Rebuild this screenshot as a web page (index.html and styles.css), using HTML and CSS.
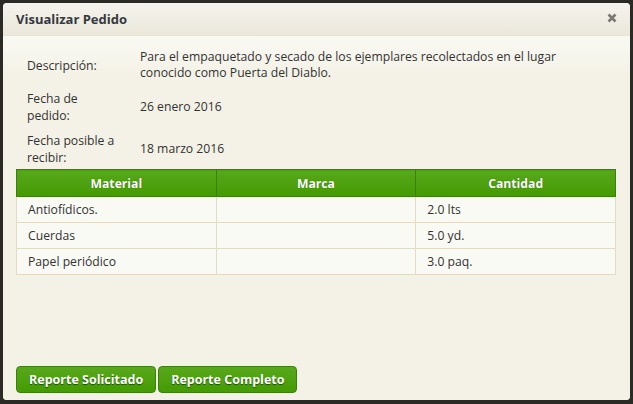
FILE: index.html
```html
<!DOCTYPE html>
<html lang="es">
<head>
<meta charset="utf-8">
<title>Visualizar Pedido</title>
<link rel="stylesheet" href="styles.css">
</head>
<body>
<div class="dialog">
  <div class="titlebar">
    <span class="title">Visualizar Pedido</span>
    <span class="close" aria-label="Cerrar">
      <svg width="10" height="10" viewBox="0 0 10 10"><path d="M1.5 1.5 L8.5 8.5 M8.5 1.5 L1.5 8.5" stroke="#7a7872" stroke-width="2.6" stroke-linecap="butt"/></svg>
    </span>
  </div>
  <div class="content">
    <div class="info">
      <div class="label">Descripción:</div>
      <div class="value">Para el empaquetado y secado de los ejemplares recolectados en el lugar conocido como Puerta del Diablo.</div>
      <div class="label">Fecha de pedido:</div>
      <div class="value">26 enero 2016</div>
      <div class="label">Fecha posible a recibir:</div>
      <div class="value">18 marzo 2016</div>
    </div>
    <table class="grid">
      <thead>
        <tr><th>Material</th><th>Marca</th><th>Cantidad</th></tr>
      </thead>
      <tbody>
        <tr><td>Antiofídicos.</td><td></td><td>2.0 lts</td></tr>
        <tr><td>Cuerdas</td><td></td><td>5.0 yd.</td></tr>
        <tr><td>Papel periódico</td><td></td><td>3.0 paq.</td></tr>
      </tbody>
    </table>
    <div class="actions">
      <button class="btn">Reporte Solicitado</button>
      <button class="btn">Reporte Completo</button>
    </div>
  </div>
</div>
</body>
</html>
```
FILE: styles.css
```css
html, body {
  margin: 0;
  padding: 0;
}
body {
  background: #2c2a25;
  width: 633px;
  height: 404px;
  padding: 3px 3px 4px 3px;
  box-sizing: border-box;
  font-family: "Open Sans", "Noto Sans", sans-serif;
  font-size: 12.2px;
  color: #333;
}
.dialog {
  height: 397px;
  width: 627px;
  background: #f4f2e6;
  border-radius: 4px;
  display: flex;
  flex-direction: column;
  overflow: hidden;
}
.titlebar {
  height: 32px;
  flex: none;
  display: flex;
  align-items: center;
  justify-content: space-between;
  padding: 0 13px 0 13px;
  background: linear-gradient(#f5f3ed, #efece3 60%, #ebe7da);
  border-bottom: 1px solid #e6e2d4;
}
.title {
  font-weight: bold;
  font-size: 13px;
  color: #333a40;
}
.close {
  display: flex;
  margin-top: -2px;
}
.content {
  flex: 1;
  display: flex;
  flex-direction: column;
  padding: 8px 12px 7px 13px;
  background: linear-gradient(#f9f9f4, #f4f2e6 40px);
}
.info {
  display: grid;
  grid-template-columns: 124px 1fr;
  grid-auto-rows: 42px;
}
.label {
  padding: 4px 24px 4px 11px;
  line-height: 17px;
  display: flex;
  align-items: center;
}
.value {
  padding: 4px 30px 4px 0;
  line-height: 16px;
  display: flex;
  align-items: center;
}
.grid {
  border-collapse: collapse;
  width: 600px;
  table-layout: fixed;
  margin-top: -1px;
}
.grid th {
  height: 26px;
  padding: 0;
  color: #fff;
  font-weight: bold;
  font-size: 12.2px;
  background: linear-gradient(#58a81c, #449b02);
  border: 1px solid #3d7f0d;
  text-shadow: 0 0 1px #2a5a05;
}
.grid td {
  height: 25px;
  padding: 0 11px;
  background: #fafaf5;
  border: 1px solid #e2dbc7;
}
.actions {
  margin-top: auto;
  display: flex;
  gap: 2px;
}
.btn {
  font-family: inherit;
  font-weight: bold;
  font-size: 12.5px;
  color: #fff;
  height: 27px;
  padding: 0 12px;
  border: 1px solid #3d7f0d;
  border-radius: 4px;
  background: linear-gradient(#58a81c, #449b02);
  text-shadow: 0 1px 1px #1f4a03;
  cursor: pointer;
}
```
